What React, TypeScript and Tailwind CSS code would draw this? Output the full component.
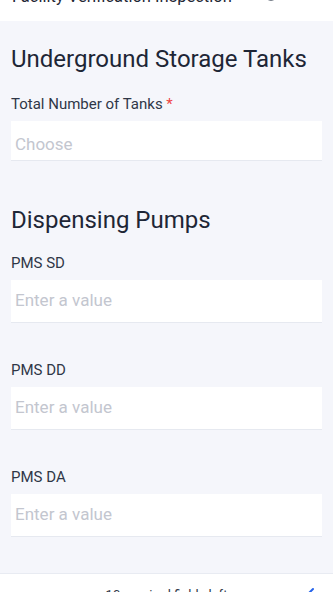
import React from "react";

function Field({ label, placeholder, required, h = "h-[43px]", pt = "" }: { label: string; placeholder: string; required?: boolean; h?: string; pt?: string }) {
  return (
    <div className="flex flex-col">
      <div className="text-[15px] leading-[20px] text-[#2f3747]">
        {label}
        {required && <span className="text-[#ef4444]"> *</span>}
      </div>
      <div className={`mt-[7px] ${h} ${pt} bg-white border-b border-[#e6e9f0] flex items-center px-[4px]`}>
        <span className="text-[17px] text-[#c3c6cf]">{placeholder}</span>
      </div>
    </div>
  );
}

export default function App() {
  return (
    <div className="w-[333px] min-h-[592px] bg-[#f5f6fb] flex flex-col" style={{ fontFamily: "Roboto, 'Noto Sans', sans-serif" }}>
      <div className="h-[21px] bg-white overflow-hidden flex items-start px-[12px]">
        <div className="mt-[-14px] flex items-start w-full">
          <span className="text-[16.5px] leading-[22px] text-[#1f2735]">Facility Verification Inspection</span>
          <svg className="ml-[31px] mt-[-1px]" width="16" height="16" viewBox="0 0 16 16" fill="none" stroke="#4b5563" strokeWidth="1.3">
            <circle cx="8" cy="8" r="7" />
          </svg>
        </div>
      </div>
      <div className="flex flex-col px-[11px] pt-[24px] pb-[36px] bg-[#f5f6fb]">
        <h2 className="text-[24px] leading-[28px] text-[#1e2636]">Underground Storage Tanks</h2>
        <div className="mt-[21px]">
          <Field label="Total Number of Tanks" placeholder="Choose" required h="h-[40px]" pt="pt-[8px]" />
        </div>
        <h2 className="mt-[45px] text-[24px] leading-[28px] text-[#1e2636]">Dispensing Pumps</h2>
        <div className="mt-[19px] flex flex-col gap-[37px]">
          <Field label="PMS SD" placeholder="Enter a value" />
          <Field label="PMS DD" placeholder="Enter a value" />
          <Field label="PMS DA" placeholder="Enter a value" />
        </div>
      </div>
      <div className="h-[56px] bg-white border-t border-[#e8ebf2] flex items-start justify-center relative">
        <span className="mt-[11px] text-[13px] text-[#2f3747]">10 required fields left</span>
        <svg className="absolute left-[300px] top-[13px]" width="14" height="12" viewBox="0 0 14 12" fill="none" stroke="#2563eb" strokeWidth="2" strokeLinecap="round">
          <path d="M1 6 L5 10 L13 2" />
        </svg>
      </div>
    </div>
  );
}
